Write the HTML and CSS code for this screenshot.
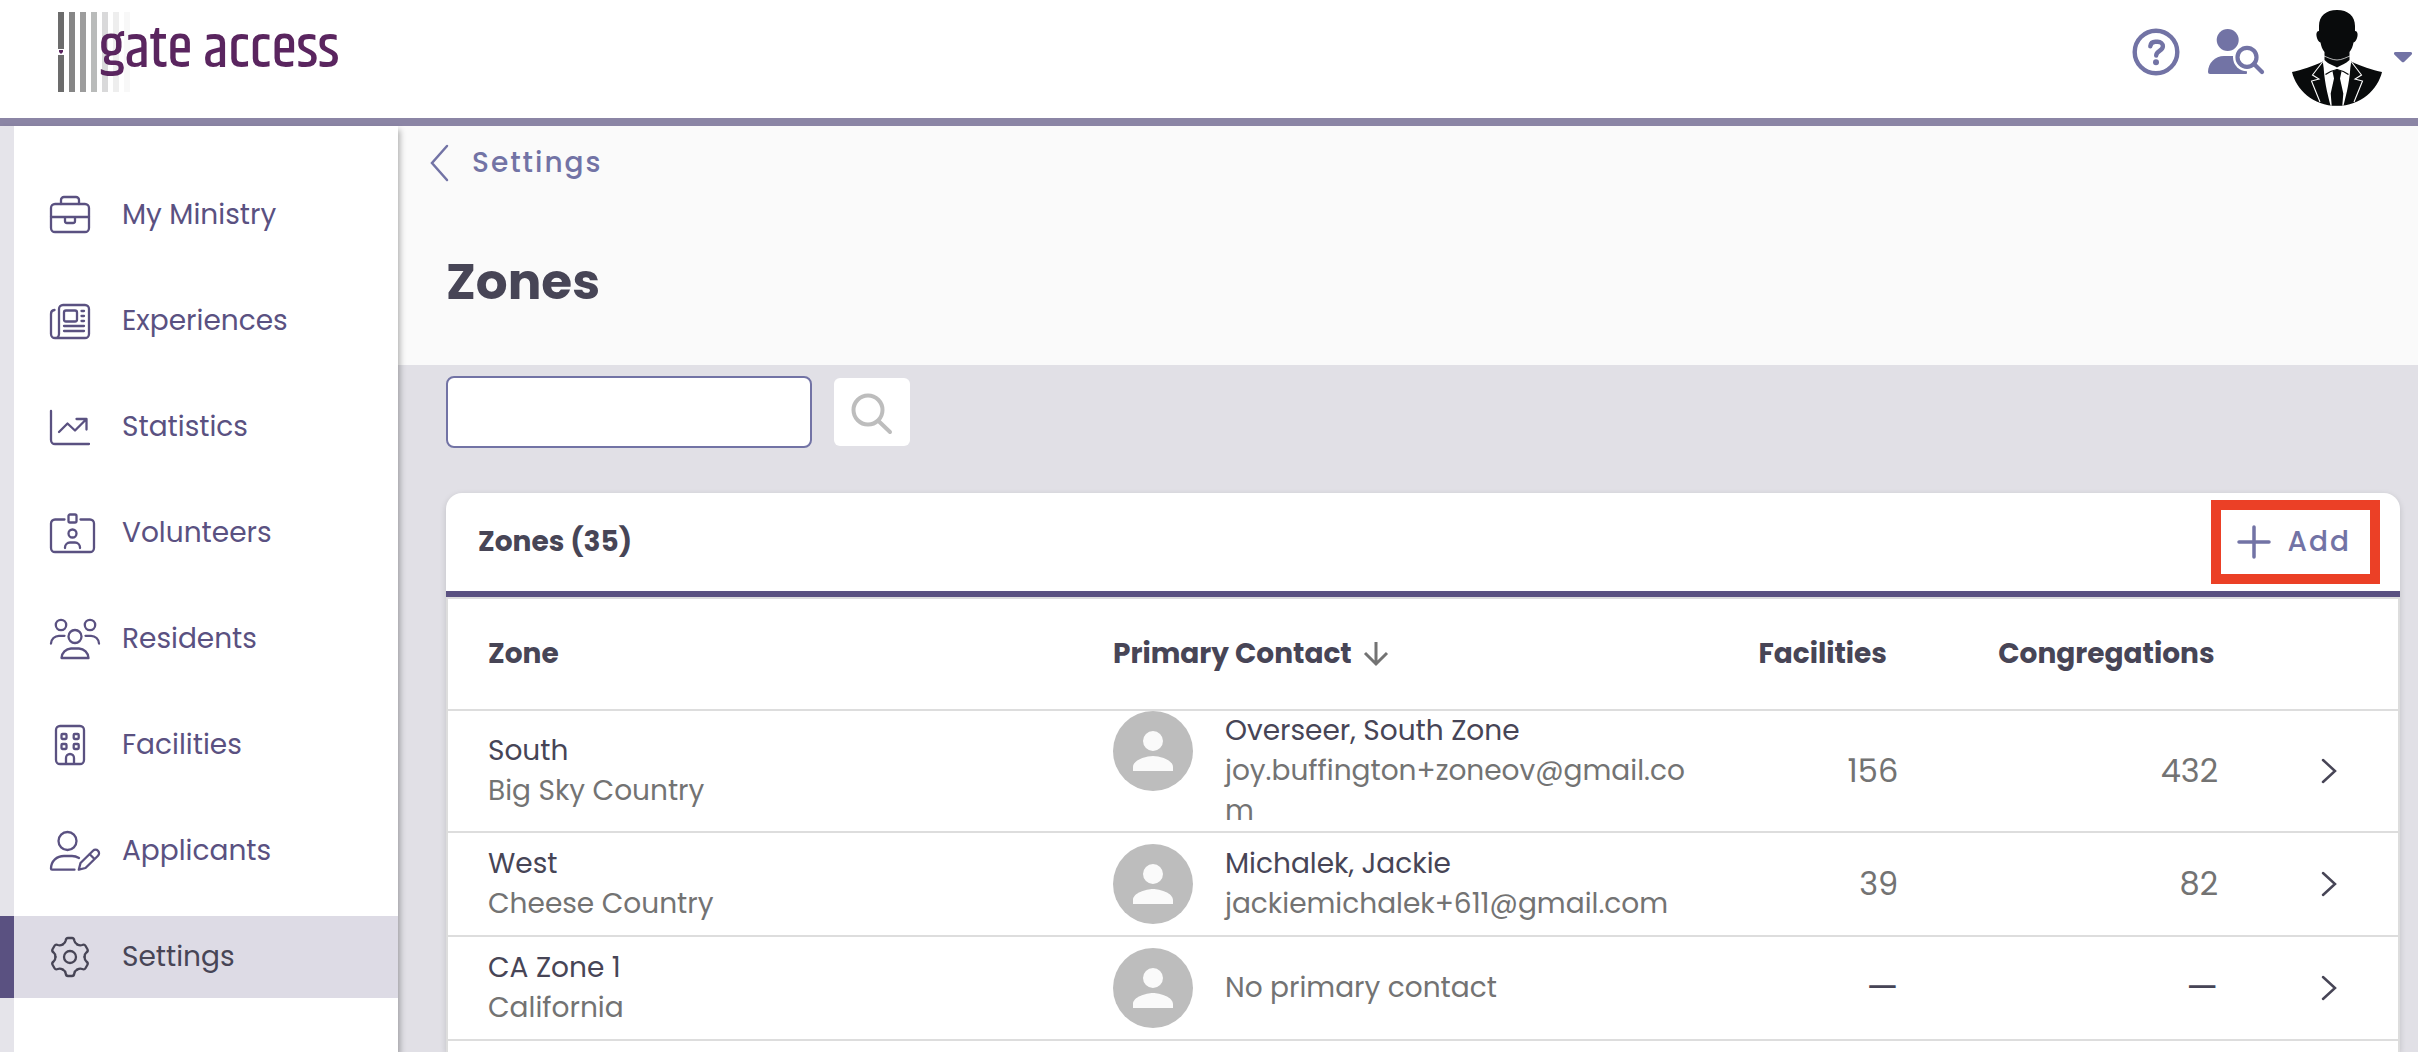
FILE: index.html
```html
<!DOCTYPE html>
<html lang="en">

<head>
    <meta charset="UTF-8">
    <meta name="viewport" content="width=device-width, initial-scale=1">
    <title>Zones</title>
    <link rel="stylesheet" href="styles.css">
</head>

<body>
    <header class="topbar">
        <a class="logo" href="#">
            <svg width="282" height="84" viewBox="0 0 282 84" role="img" aria-label="gate access">
                <path fill="#6c6c6c" d="M0 0h6v37H0zM0 43h6v37H0z" />
                <path fill="#5a255f" d="M3 42l-2-2v-2h4v2z" />
                <path fill="#868686" d="M11 0h6v80h-6z" />
                <path fill="#9d9d9d" d="M22 0h6v80h-6z" />
                <path fill="#b9bbba" d="M33 0h6v80h-6z" />
                <path fill="#d9d9da" d="M44 0h6v80h-6z" />
                <path fill="#eeeeee" d="M55 0h6v80h-6z" />
                <path fill="#f8f8f8" d="M66 0h6v80h-6z" />
                <text class="logo-text" x="41" y="55">gate access</text>
            </svg>
        </a>

        <div class="top-actions">
            <a class="top-icon" href="#" aria-label="Help">
                <svg width="48" height="48" viewBox="0 0 48 48">
                    <circle cx="24" cy="24" r="21.3" fill="none" stroke="currentColor" stroke-width="4.4" />
                    <path d="M18.3 18.2c.4-3 2.300-4.500 5-4.500h2.400c3 0 5.200 2 5.200 4.600 0 4.800-6.700 4.500-6.700 9.300" fill="none" stroke="currentColor" stroke-width="4.400" stroke-linecap="round" />
                    <circle cx="24" cy="34.300" r="3" fill="currentColor" />
                </svg>
            </a>
            <a class="top-icon" href="#" aria-label="Find person">
                <svg width="56" height="46" viewBox="0 0 56 46">
                    <circle cx="19.700" cy="11" r="11" fill="currentColor" />
                    <path d="M0 43c0-9 7-16 16-16h9c8 0 14 7 14 17a1 1 0 0 1-1 1H2a2 2 0 0 1-2-2z" fill="currentColor" />
                    <circle cx="39" cy="28.300" r="14" fill="#fff" />
                    <path d="M46 35l9 9" stroke="#fff" stroke-width="9" />
                    <circle cx="39" cy="28.300" r="9.500" fill="none" stroke="currentColor" stroke-width="4.200" />
                    <path d="M46 35l8 8" stroke="currentColor" stroke-width="4.200" stroke-linecap="round" />
                </svg>
            </a>
            <button class="profile" type="button" aria-label="Profile menu">
                <svg class="profile-pic" width="90" height="96" viewBox="0 0 90 96">
                    <path fill="#090b0c" d="M45 0c11 0 18 6 18 16v5c2 0 3 2 2.500 5s-2 6-4 6.500c-.5 3.500-2 7-4 9.500V50c-4 4-8 5-12.500 7.500C40.500 55 36 54 32.500 50v-8c-2-2.500-3.500-6-4-9.500-2-.5-3.500-3.500-4-6.500s.5-5 2.500-5v-5C27 6 34 0 45 0z" />
                    <path fill="none" stroke="#fff" stroke-width=".7" d="M32 46c3 1 8 4 13 4s10-3 13-4" />
                    <path fill="#090b0c" d="M0 62c9-2 22-6 30.700-10.500L39.700 95.500h10.600L59.300 51.500C68 56 81 60 90 62 86 79 69 96 45 96S4 79 0 62z" />
                    <path fill="#fff" d="M31.500 52L45 59l13.500-7c0 16-4 32-7 43.500h-13C35.500 84 31.500 68 31.500 52z" />
                    <path fill="#090b0c" d="M40.500 61.500L45 59.300l4.500 2.200-1.500 7 3.300 15-1 12.300H39.700l-1-12.300 3.300-15z" />
                    <path fill="none" stroke="#090b0c" stroke-width="1.200" d="M45 59.500c-5 1-9 3-11.500 5M45 59.500c5 1 9 3 11.500 5" />
                    <path fill="none" stroke="#fff" stroke-width="1.100" d="M30.500 52L20.500 65l6.500 4-7.500 2L28 92M59.500 52l10 13-6.500 4 7.500 2L62 92" />
                </svg>
                <svg class="profile-caret" width="18" height="12" viewBox="0 0 18 12">
                    <path fill="currentColor" d="M1.500 0h15a1.500 1.500 0 0 1 1.200 2.500L10.300 9.800a2 2 0 0 1-2.600 0L.3 2.500A1.500 1.500 0 0 1 1.500 0z" />
                </svg>
            </button>
        </div>
    </header>

    <div class="page">
        <nav class="sidebar">
            <a class="nav-item" href="#">
                <svg class="nav-icon" viewBox="0 0 50 40">
                    <rect x="1" y="9" width="38" height="28" rx="4" />
                    <path d="M11 9V5a3 3 0 0 1 3-3h12a3 3 0 0 1 3 3v4M1 22h38M15 22v4a2 2 0 0 0 2 2h6a2 2 0 0 0 2-2v-4" />
                </svg>
                My Ministry
            </a>
            <a class="nav-item" href="#">
                <svg class="nav-icon" viewBox="0 0 50 40">
                    <path d="M5 37a4 4 0 0 0 4-4V8a4 4 0 0 1 4-4h22a4 4 0 0 1 4 4v25a4 4 0 0 1-4 4H5a4 4 0 0 1-4-4V13a4 4 0 0 1 3.500-4" />
                    <rect x="14" y="9.500" width="13" height="11" rx="2" />
                    <path d="M31.500 10H34M31.500 15H34M31.500 20H34M14 25h20M14 30h20" />
                </svg>
                Experiences
            </a>
            <a class="nav-item" href="#">
                <svg class="nav-icon" viewBox="0 0 50 40">
                    <path d="M1 4v29a4 4 0 0 0 4 4h34M9 25l8.500-8.500 7.500 7L36.500 12M26.500 12H36.500V22.500" />
                </svg>
                Statistics
            </a>
            <a class="nav-item" href="#">
                <svg class="nav-icon" viewBox="0 0 50 40">
                    <path d="M14.500 6.500H5a4 4 0 0 0-4 4V35a4 4 0 0 0 4 4h35a4 4 0 0 0 4-4V10.500a4 4 0 0 0-4-4h-9.500" />
                    <rect x="18.500" y="1.500" width="8" height="8" rx="1.500" />
                    <circle cx="22.500" cy="20.500" r="4" />
                    <path d="M15 35v-.5a5 5 0 0 1 5-5h5a5 5 0 0 1 5 5v.5" />
                </svg>
                Volunteers
            </a>
            <a class="nav-item" href="#">
                <svg class="nav-icon" viewBox="0 0 50 40">
                    <circle cx="11" cy="6" r="5.200" />
                    <circle cx="40" cy="6" r="5.200" />
                    <circle cx="25" cy="17.500" r="6.500" />
                    <path d="M1 24.500a8 8 0 0 1 8-7.700h5.500M49 24.500a8 8 0 0 0-8-7.700h-5.500" />
                    <path d="M11.500 39a10 10 0 0 1 9.500-9.500h8a10 10 0 0 1 9.500 9.500z" />
                </svg>
                Residents
            </a>
            <a class="nav-item" href="#">
                <svg class="nav-icon" viewBox="0 0 50 40">
                    <rect x="6" y="1" width="28" height="38" rx="4" />
                    <rect x="11.500" y="9" width="5" height="5" rx="1" />
                    <rect x="23.700" y="9" width="5" height="5" rx="1" />
                    <rect x="11.500" y="19" width="5" height="5" rx="1" />
                    <rect x="23.700" y="19" width="5" height="5" rx="1" />
                    <path d="M16 38.500V33a4 4 0 0 1 8 0v5.500" />
                </svg>
                Facilities
            </a>
            <a class="nav-item" href="#">
                <svg class="nav-icon" viewBox="0 0 50 40">
                    <circle cx="17.500" cy="10" r="9" />
                    <path d="M24.500 38.700H2a1 1 0 0 1-1-1C1 30 7 25 14 25h8c2.500 0 5 .8 7 2" />
                    <path d="M28.800 38.700l1.700-6.700L43 19.800a3.400 3.400 0 0 1 5 5L35.500 37zM39.500 23l5 5" />
                </svg>
                Applicants
            </a>
            <a class="nav-item active" href="#" aria-current="page">
                <svg class="nav-icon" viewBox="-20 -20 50 40">
                    <defs>
                        <path id="tooth" d="M-7.250-12.600C-5.500-13.600-4.600-14.500-4.300-16.500Q-4-19-2-19H2Q4-19 4.300-16.500C4.600-14.500 5.500-13.600 7.250-12.600" />
                    </defs>
                    <use href="#tooth" />
                    <use href="#tooth" transform="rotate(60)" />
                    <use href="#tooth" transform="rotate(120)" />
                    <use href="#tooth" transform="rotate(180)" />
                    <use href="#tooth" transform="rotate(240)" />
                    <use href="#tooth" transform="rotate(300)" />
                    <circle r="6" />
                </svg>
                Settings
            </a>
        </nav>

        <main class="content">
            <div class="page-head">
                <a class="back" href="#">
                    <svg width="20" height="36" viewBox="0 0 20 36">
                        <path d="M17 1L2 18l15 17" />
                    </svg>
                    Settings
                </a>
                <h1>Zones</h1>
            </div>

            <form class="search" role="search">
                <input class="search-input" type="text" aria-label="Search zones">
                <button class="search-btn" type="button" aria-label="Search">
                    <svg width="40" height="42" viewBox="0 0 40 42">
                        <circle cx="16" cy="19" r="14.500" />
                        <path d="M26.500 30L38 41" />
                    </svg>
                </button>
            </form>

            <section class="card">
                <div class="card-head">
                    <h2>Zones (35)</h2>
                    <button class="add-btn" type="button">
                        <svg width="34" height="34" viewBox="0 0 34 34">
                            <path d="M17 2v30M2 17h30" />
                        </svg>
                        Add
                    </button>
                </div>

                <div class="card-body">
                    <table class="zones">
                        <colgroup>
                            <col class="col-zone">
                            <col class="col-contact">
                            <col class="col-facilities">
                            <col class="col-congregations">
                            <col>
                        </colgroup>
                        <thead>
                            <tr>
                                <th>Zone</th>
                                <th>
                                    Primary Contact
                                    <svg class="sort" width="24" height="24" viewBox="0 0 24 24">
                                        <path d="M12 1v22M1 12l11 11 11-11" />
                                    </svg>
                                </th>
                                <th>Facilities</th>
                                <th>Congregations</th>
                                <td></td>
                            </tr>
                        </thead>
                        <tbody>
                            <tr>
                                <td>
                                    <div>South</div>
                                    <div class="muted">Big Sky Country</div>
                                </td>
                                <td>
                                    <div class="contact">
                                        <svg class="avatar" viewBox="0 0 80 80">
                                            <path d="M40 20a10 10 0 1 1 0 20 10 10 0 0 1 0-20zM20 60v-4c0-7 13-11 20-11s20 4 20 11v4z" />
                                        </svg>
                                        <div class="contact-text">
                                            <div>Overseer, South Zone</div>
                                            <div class="muted">joy.buffington+zoneov@gmail.com</div>
                                        </div>
                                    </div>
                                </td>
                                <td class="num">156</td>
                                <td class="num">432</td>
                                <td class="open">
                                    <a href="#" aria-label="Open South"><svg width="16" height="26" viewBox="0 0 16 26"><path d="M2 2l12 11L2 24" /></svg></a>
                                </td>
                            </tr>
                            <tr>
                                <td>
                                    <div>West</div>
                                    <div class="muted">Cheese Country</div>
                                </td>
                                <td>
                                    <div class="contact">
                                        <svg class="avatar" viewBox="0 0 80 80">
                                            <path d="M40 20a10 10 0 1 1 0 20 10 10 0 0 1 0-20zM20 60v-4c0-7 13-11 20-11s20 4 20 11v4z" />
                                        </svg>
                                        <div class="contact-text">
                                            <div>Michalek, Jackie</div>
                                            <div class="muted">jackiemichalek+611@gmail.com</div>
                                        </div>
                                    </div>
                                </td>
                                <td class="num">39</td>
                                <td class="num">82</td>
                                <td class="open">
                                    <a href="#" aria-label="Open West"><svg width="16" height="26" viewBox="0 0 16 26"><path d="M2 2l12 11L2 24" /></svg></a>
                                </td>
                            </tr>
                            <tr>
                                <td>
                                    <div>CA Zone 1</div>
                                    <div class="muted">California</div>
                                </td>
                                <td>
                                    <div class="contact">
                                        <svg class="avatar" viewBox="0 0 80 80">
                                            <path d="M40 20a10 10 0 1 1 0 20 10 10 0 0 1 0-20zM20 60v-4c0-7 13-11 20-11s20 4 20 11v4z" />
                                        </svg>
                                        <div class="contact-text">
                                            <div class="muted">No primary contact</div>
                                        </div>
                                    </div>
                                </td>
                                <td class="num none">—</td>
                                <td class="num none">—</td>
                                <td class="open">
                                    <a href="#" aria-label="Open CA Zone 1"><svg width="16" height="26" viewBox="0 0 16 26"><path d="M2 2l12 11L2 24" /></svg></a>
                                </td>
                            </tr>
                        </tbody>
                    </table>
                </div>
            </section>
        </main>
    </div>
</body>

</html>
```

FILE: styles.css
```css
* {
    box-sizing: border-box;
}

body {
    margin: 0;
    min-height: 100vh;
    display: flex;
    flex-direction: column;
    font-family: Poppins, Inter, "Liberation Sans", sans-serif;
    font-size: 28px;
    line-height: 40px;
    color: #474556;
    background: #e1e0e6;
}

a {
    color: inherit;
    text-decoration: none;
}

button {
    font: inherit;
    border: 0;
    padding: 0;
    background: none;
    cursor: pointer;
}

svg {
    display: block;
    flex: none;
    overflow: visible;
}

/* top bar */
.topbar {
    display: flex;
    justify-content: space-between;
    align-items: flex-start;
    height: 126px;
    padding: 10px 6px 0 58px;
    background: #fff;
    border-bottom: 8px solid #8b85a5;
}

.logo {
    padding-top: 2px;
}

.logo-text {
    font-family: Khand, Rajdhani, "Liberation Sans", sans-serif;
    font-size: 58px;
    font-weight: 500;
    fill: #5a255f;
}

.top-actions {
    display: flex;
    gap: 28px;
    color: #7273a5;
}

.top-icon {
    display: flex;
    align-items: center;
    height: 84px;
}

.profile {
    display: flex;
    align-items: center;
    gap: 12px;
    color: #7273a5;
}

.page {
    flex: 1;
    display: flex;
}

/* side menu */
.sidebar {
    position: relative;
    z-index: 1;
    flex: none;
    width: 398px;
    padding-top: 48px;
    display: flex;
    flex-direction: column;
    gap: 24px;
    color: #5a5181;
    background: linear-gradient(to right, #e5e4ea 14px, #fff 14px);
    box-shadow: 2px 4px 6px rgba(0, 0, 0, 0.3);
}

.nav-item {
    display: flex;
    align-items: center;
    gap: 22px;
    height: 82px;
    padding-left: 36px;
    border-left: 14px solid transparent;
}

.nav-item.active {
    color: #474556;
    background: #dddbe5;
    border-left-color: #5a5181;
}

.nav-icon {
    width: 50px;
    height: 40px;
    fill: none;
    stroke: currentColor;
    stroke-width: 2.3;
    stroke-linecap: round;
    stroke-linejoin: round;
}

/* page heading */
.content {
    flex: 1;
    min-width: 0;
    display: flex;
    flex-direction: column;
}

.page-head {
    padding: 17px 32px 47px;
    background: #fafafa;
}

.back {
    display: inline-flex;
    align-items: center;
    gap: 22px;
    vertical-align: top;
    font-weight: 500;
    letter-spacing: 2px;
    color: #7273a5;
}

.back svg {
    fill: none;
    stroke: currentColor;
    stroke-width: 2.5;
    stroke-linecap: round;
}

h1 {
    margin: 63px 0 0 16px;
    font-size: 50px;
    line-height: 72px;
    font-weight: 700;
}

.search {
    display: flex;
    align-items: center;
    gap: 22px;
    padding: 11px 48px 45px;
}

.search-input {
    width: 366px;
    height: 72px;
    padding: 0 16px;
    font: inherit;
    color: inherit;
    background: #fff;
    border: 2px solid #7273a5;
    border-radius: 8px;
}

.search-btn {
    display: flex;
    align-items: center;
    justify-content: center;
    width: 76px;
    height: 68px;
    background: #fff;
    border-radius: 6px;
}

.search-btn svg {
    fill: none;
    stroke: #bdbdbd;
    stroke-width: 4;
    stroke-linecap: round;
}

/* zones card */
.card {
    flex: 1;
    display: flex;
    flex-direction: column;
    margin: 0 18px 0 48px;
    background: #fff;
    border-radius: 16px 16px 0 0;
    box-shadow: 0 2px 6px rgba(0, 0, 0, 0.15);
}

.card-head {
    display: flex;
    align-items: center;
    justify-content: space-between;
    height: 104px;
    padding: 0 20px 0 32px;
    border-bottom: 6px solid #5a5181;
}

h2 {
    margin: 0;
    font-size: 28px;
    font-weight: 700;
}

.add-btn {
    display: flex;
    align-items: center;
    gap: 17px;
    height: 84px;
    padding: 0 19px 0 16px;
    font-weight: 500;
    letter-spacing: 2px;
    color: #7273a5;
    border: 10px solid #eb4026;
}

.add-btn svg {
    fill: none;
    stroke: currentColor;
    stroke-width: 3.5;
    stroke-linecap: round;
}

.card-body {
    flex: 1;
    border: 2px solid #dddddd;
    border-bottom: 0;
}

.zones {
    width: 100%;
    table-layout: fixed;
    border-collapse: separate;
    border-spacing: 0;
}

.col-zone {
    width: 32.05%;
}

.col-contact {
    width: 33.1%;
}

.col-facilities {
    width: 12.3%;
}

.col-congregations {
    width: 16.4%;
}

.zones th,
.zones td {
    height: 104px;
    padding: 0 0 0 40px;
    text-align: left;
    vertical-align: middle;
    border-bottom: 2px solid #dddddd;
}

.zones thead th,
.zones thead td {
    height: 112px;
    font-weight: 700;
}

.zones .num {
    padding: 0 60px 0 0;
    text-align: right;
    font-size: 32px;
    color: #737373;
}

.zones .none {
    font-size: 36px;
    color: #474556;
}

.muted {
    color: #737373;
}

.sort {
    display: inline-block;
    margin-left: 6px;
    vertical-align: -2px;
    fill: none;
    stroke: #737373;
    stroke-width: 3;
}

.contact {
    display: flex;
    align-items: flex-start;
    gap: 32px;
}

.avatar {
    width: 80px;
    height: 80px;
    fill: #fafafa;
    background: #bdbdbd;
    border-radius: 50%;
}

.contact-text {
    width: 464px;
    min-height: 80px;
    display: flex;
    flex-direction: column;
    justify-content: center;
    overflow-wrap: anywhere;
}

.zones .open {
    padding-left: 43px;
}

.open a {
    display: block;
    width: 16px;
}

.open svg {
    fill: none;
    stroke: #474556;
    stroke-width: 2.5;
    stroke-linecap: round;
}
```
